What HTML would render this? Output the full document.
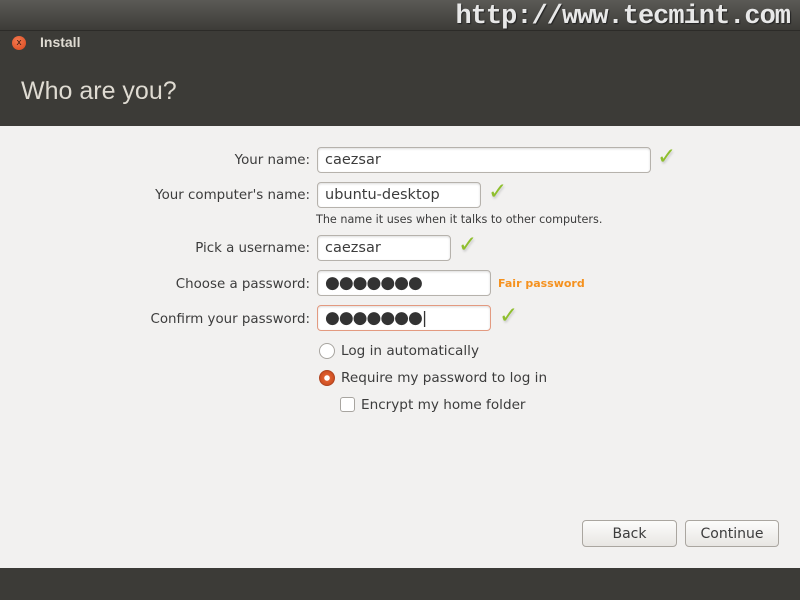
<!DOCTYPE html>
<html><head><meta charset="utf-8"><style>
*{margin:0;padding:0;box-sizing:border-box}
body{width:800px;height:600px;overflow:hidden;background:#f2f1f0;font-family:"DejaVu Sans","Liberation Sans",sans-serif;position:relative;color:#3c3c3c}
.top{position:absolute;left:0;top:0;width:800px;height:30px;background:linear-gradient(#5b5a56,#3d3c38)}
.wm{position:absolute;right:10px;top:2px;font:bold 27px "Liberation Mono",monospace;color:#e8e8e8;letter-spacing:-1px;text-shadow:1px 1px 1px #222}
.head{position:absolute;left:0;top:30px;width:800px;height:96px;background:#3c3b37;border-top:1px solid #2c2b28}
.close{position:absolute;left:12px;top:36px;width:14px;height:14px;border-radius:50%;background:radial-gradient(circle at 40% 35%,#f47a50,#d7461c);color:#3a1a10;font-size:9px;text-align:center;line-height:14px}
.install{position:absolute;left:40px;top:34px;color:#dfdbd2;font-size:14px;font-weight:bold;font-family:"Liberation Sans",sans-serif}
.who{position:absolute;left:21px;top:77px;color:#dfdbd2;font-size:25px;font-family:"Liberation Sans",sans-serif}
.lbl{position:absolute;right:490px;font-size:13.4px;color:#3c3c3c;white-space:nowrap}
.in{position:absolute;left:317px;height:26px;border:1px solid #b6b2ac;border-radius:4px;background:#fff;font-size:14.5px;padding:4px 0 0 7px;color:#3c3c3c;box-shadow:inset 0 1px 2px #ddd}
.dots{font-size:17px;letter-spacing:-1px;padding-top:2px;color:#333}
.chk{position:absolute;color:#8fbf2e;font-size:23px;font-weight:bold;text-shadow:1px 2px 2px #ccc}
.hint{position:absolute;left:316px;top:213px;font-size:11.2px}
.fair{position:absolute;left:498px;top:277px;color:#f5911e;font-weight:bold;font-size:11px}
.radio{position:absolute;left:319px;width:16px;height:16px;border-radius:50%;border:1px solid #a8a5a0;background:#fff}
.radio.on{background:radial-gradient(circle,#fff 0 2.5px,#e06030 3px,#c84a1e 8px);border-color:#b04420}
.opt{position:absolute;font-size:13.6px}
.cb{position:absolute;left:340px;top:397px;width:15px;height:15px;border:1px solid #a8a5a0;border-radius:3px;background:#fff}
.btn{position:absolute;top:520px;height:27px;border:1px solid #aaa6a0;border-radius:4px;background:linear-gradient(#fcfcfb,#e8e6e3);font-size:14px;text-align:center;line-height:26px;color:#3c3c3c}
.bot{position:absolute;left:0;top:568px;width:800px;height:32px;background:#3c3b37}
</style></head><body>
<div class="top"><div class="wm">http://www.tecmint.com</div></div>
<div class="head"></div>
<div class="close">x</div>
<div class="install">Install</div>
<div class="who">Who are you?</div>

<div class="lbl" style="top:153px">Your name:</div>
<div class="in" style="top:147px;width:334px">caezsar</div>
<div class="chk" style="left:657px;top:144px">✓</div>

<div class="lbl" style="top:188px">Your computer's name:</div>
<div class="in" style="top:182px;width:164px">ubuntu-desktop</div>
<div class="chk" style="left:488px;top:179px">✓</div>
<div class="hint">The name it uses when it talks to other computers.</div>

<div class="lbl" style="top:241px">Pick a username:</div>
<div class="in" style="top:235px;width:134px">caezsar</div>
<div class="chk" style="left:458px;top:232px">✓</div>

<div class="lbl" style="top:277px">Choose a password:</div>
<div class="in dots" style="top:270px;width:174px">●●●●●●●</div>
<div class="fair">Fair password</div>

<div class="lbl" style="top:312px">Confirm your password:</div>
<div class="in dots" style="top:305px;width:174px;border-color:#e39a80">●●●●●●●<span style="font-size:16px;font-weight:normal">|</span></div>
<div class="chk" style="left:499px;top:303px">✓</div>

<div class="radio" style="top:343px"></div>
<div class="opt" style="left:341px;top:343px">Log in automatically</div>
<div class="radio on" style="top:370px"></div>
<div class="opt" style="left:341px;top:370px">Require my password to log in</div>
<div class="cb"></div>
<div class="opt" style="left:361px;top:397px">Encrypt my home folder</div>

<div class="btn" style="left:582px;width:95px">Back</div>
<div class="btn" style="left:685px;width:94px">Continue</div>
<div class="bot"></div>
</body></html>
